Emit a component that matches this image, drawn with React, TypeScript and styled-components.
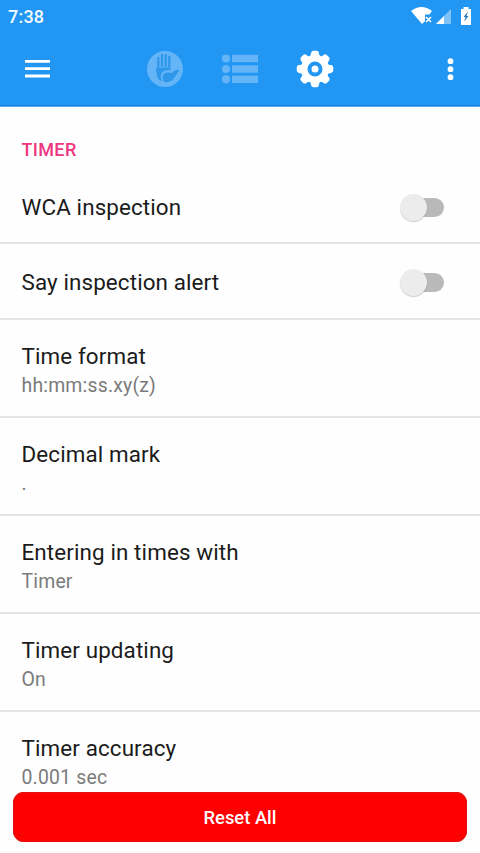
import React from "react";
import styled, { createGlobalStyle } from "styled-components";

const GlobalStyle = createGlobalStyle`
  * { box-sizing: border-box; }
  html, body { margin: 0; padding: 0; background: #fefefe; overflow: hidden; }
  button { font: inherit; border: 0; padding: 0; background: none; }
`;

const Screen = styled.div`
  width: 480px;
  height: 853px;
  display: flex;
  flex-direction: column;
  overflow: hidden;
  background: #fefefe;
  font-family: Roboto, sans-serif;
  color: #1b1b1b;
`;

const Header = styled.header`
  flex: none;
  height: 107px;
  background: #2196f3;
  border-bottom: 1px solid #57aaf0;
  box-shadow: inset 0 -1px 0 #1682d8;
`;

const StatusBar = styled.div`
  height: 32px;
  padding: 0 9px 0 8px;
  display: flex;
  align-items: center;
  justify-content: space-between;
`;

const Clock = styled.span`
  font-size: 18px;
  font-weight: 500;
  line-height: 32px;
  letter-spacing: 0.2px;
  padding-top: 2px;
  color: #f4faff;
`;

const StatusIcons = styled.svg`
  display: block;
  width: 60px;
  height: 32px;
`;

const Toolbar = styled.nav`
  height: 74px;
  padding: 0 19px 0 25px;
  display: flex;
  align-items: center;
`;

const IconButton = styled.button<{ $width: number; $dim?: boolean }>`
  width: ${(p) => p.$width}px;
  height: 40px;
  color: ${(p) => (p.$dim ? "#64b5f8" : "#ffffff")};
  svg { display: block; }
`;

const Tabs = styled.div`
  display: flex;
  gap: 37px;
  margin-left: 96px;
  margin-right: auto;
`;

const Settings = styled.main`
  flex: 1;
  min-height: 0;
  overflow: hidden;
`;

const SectionTitle = styled.h2`
  margin: 0;
  height: 63px;
  padding: 31px 21.5px 0;
  font-size: 18px;
  line-height: 24px;
  font-weight: 500;
  letter-spacing: 0.35px;
  color: #ee3581;
`;

const Row = styled.div<{ $height: number; $top: number }>`
  height: ${(p) => p.$height}px;
  padding: ${(p) => p.$top}px 36px 0 21.5px;
  border-bottom: 2px solid #e4e4e4;
  display: flex;
  align-items: flex-start;
  justify-content: space-between;
`;

const Labels = styled.div`
  display: flex;
  flex-direction: column;
`;

const Label = styled.span`
  font-size: 22.4px;
  line-height: 29px;
  letter-spacing: 0.12px;
  white-space: nowrap;
`;

const Value = styled.span`
  font-size: 19.4px;
  line-height: 29px;
  letter-spacing: 0.2px;
  color: #7b7b7b;
  white-space: nowrap;
`;

const Switch = styled.button`
  width: 44px;
  height: 28px;
  display: flex;
  align-items: center;
`;

const Thumb = styled.span`
  flex: none;
  width: 27px;
  height: 27px;
  border-radius: 50%;
  background: #ececec;
  box-shadow: 0 1px 1px rgba(0, 0, 0, 0.2);
  z-index: 1;
`;

const Track = styled.span`
  width: 34px;
  height: 19px;
  margin-left: -17px;
  border-radius: 10px;
  background: #b9b9b9;
`;

const Footer = styled.footer`
  flex: none;
  height: 61px;
  padding: 0 13px;
`;

const ResetButton = styled.button`
  width: 100%;
  height: 50px;
  border-radius: 11px;
  background: #ff0000;
  box-shadow: inset 0 0 0 1px #e31212;
  color: #fff;
  font-size: 18.4px;
  font-weight: 500;
  line-height: 50px;
  padding-top: 1px;
`;

const toggles = [
  { label: "WCA inspection", height: 74, top: 23 },
  { label: "Say inspection alert", height: 76, top: 24 },
];

const preferences = [
  { label: "Time format", value: "hh:mm:ss.xy(z)" },
  { label: "Decimal mark", value: "." },
  { label: "Entering in times with", value: "Timer" },
  { label: "Timer updating", value: "On" },
  { label: "Timer accuracy", value: "0.001 sec" },
];

const HandIcon = () => (
  <svg width="38" height="40" viewBox="0 0 38 40">
    <circle cx="19" cy="20" r="18" fill="currentColor" />
    <g fill="none" stroke="#2f97ea" strokeWidth="2.3" strokeLinecap="round">
      <path d="M12.300 9V17.500M16 5.800V17M19.700 5.800V17M23.300 8V17.500" />
    </g>
    <path
      d="M11 18.600H23.700Q24.600 18.600 24.600 19.500V21C20 21 16 22 15 25.500C14.400 28 15 30 15.800 32.200C13 31.200 11.800 29.500 11 27C10.200 24 10 21.500 10.200 19.500Q10.300 18.600 11 18.600z"
      fill="#2f97ea"
    />
    <path
      d="M17.300 32.300C15.400 26.500 17.800 23.500 21.800 23.500C24.500 23.500 25.200 24.800 26.500 23.500C28.500 21.300 30.500 20 33.300 21C31.500 24 29.500 27.300 27.500 29.800C25 33.200 21 34 17.300 32.300z"
      fill="#2f97ea"
    />
  </svg>
);

const ListIcon = () => (
  <svg width="38" height="40" viewBox="0 0 38 40" fill="currentColor">
    {[9.5, 20, 30.3].map((y) => (
      <g key={y}>
        <circle cx="5" cy={y} r="4.1" />
        <rect x="11" y={y - 3.7} width="26" height="7.4" />
      </g>
    ))}
  </svg>
);

const GearIcon = () => (
  <svg width="38" height="40" viewBox="0 0 38 40">
    <g transform="translate(19 20)" fill="currentColor">
      <circle r="13.8" />
      {[0, 45, 90, 135, 180, 225, 270, 315].map((a) => (
        <path
          key={a}
          transform={`rotate(${a})`}
          d="M-5.800-12Q-4-13.500-3.900-16Q-3.600-18.300-1.600-18.300H1.600Q3.600-18.300 3.900-16Q4-13.500 5.800-12z"
        />
      ))}
      <circle r="5.500" fill="none" stroke="#2196f3" strokeWidth="4" />
    </g>
  </svg>
);

export default function App() {
  return (
    <Screen>
      <GlobalStyle />
      <Header>
        <StatusBar>
          <Clock>7:38</Clock>
          <StatusIcons viewBox="0 0 60 32">
            <path d="M0 11Q10.500 3 21 11L18.500 14.500H14V21L11 24z" fill="#fff" />
            <path d="M15 17l5 5m0-5l-5 5" stroke="#fff" strokeWidth="1.700" />
            <path d="M40 9V24H25z" fill="#7fc2f8" />
            <path d="M33 16V24H25z" fill="#fff" />
            <path d="M52.500 7h5v2H60v16H50V9h2.500z" fill="#fff" />
            <path d="M56.800 11.500L52.500 17h2l-1.200 4.500L57.500 16h-2z" fill="#2c78b8" />
          </StatusIcons>
        </StatusBar>
        <Toolbar>
          <IconButton $width={25} aria-label="Menu">
            <svg width="25" height="40" viewBox="0 0 25 40" fill="currentColor">
              <path d="M0 11h25v2.800H0zM0 18.300h25v2.800H0zM0 25.600h25v2.800H0z" />
            </svg>
          </IconButton>
          <Tabs>
            <IconButton $width={38} $dim aria-label="Hand timer"><HandIcon /></IconButton>
            <IconButton $width={38} $dim aria-label="Times"><ListIcon /></IconButton>
            <IconButton $width={38} aria-label="Settings"><GearIcon /></IconButton>
          </Tabs>
          <IconButton $width={20} aria-label="More">
            <svg width="20" height="40" viewBox="0 0 20 40" fill="currentColor">
              <circle cx="9.500" cy="12.200" r="2.900" />
              <circle cx="9.500" cy="20.200" r="2.900" />
              <circle cx="9.500" cy="28.200" r="2.900" />
            </svg>
          </IconButton>
        </Toolbar>
      </Header>
      <Settings>
        <SectionTitle>TIMER</SectionTitle>
        {toggles.map((t) => (
          <Row key={t.label} $height={t.height} $top={t.top}>
            <Label>{t.label}</Label>
            <Switch role="switch" aria-checked={false} aria-label={t.label}>
              <Thumb />
              <Track />
            </Switch>
          </Row>
        ))}
        {preferences.map((p) => (
          <Row key={p.label} $height={98} $top={22}>
            <Labels>
              <Label>{p.label}</Label>
              <Value>{p.value}</Value>
            </Labels>
          </Row>
        ))}
      </Settings>
      <Footer>
        <ResetButton>Reset All</ResetButton>
      </Footer>
    </Screen>
  );
}
